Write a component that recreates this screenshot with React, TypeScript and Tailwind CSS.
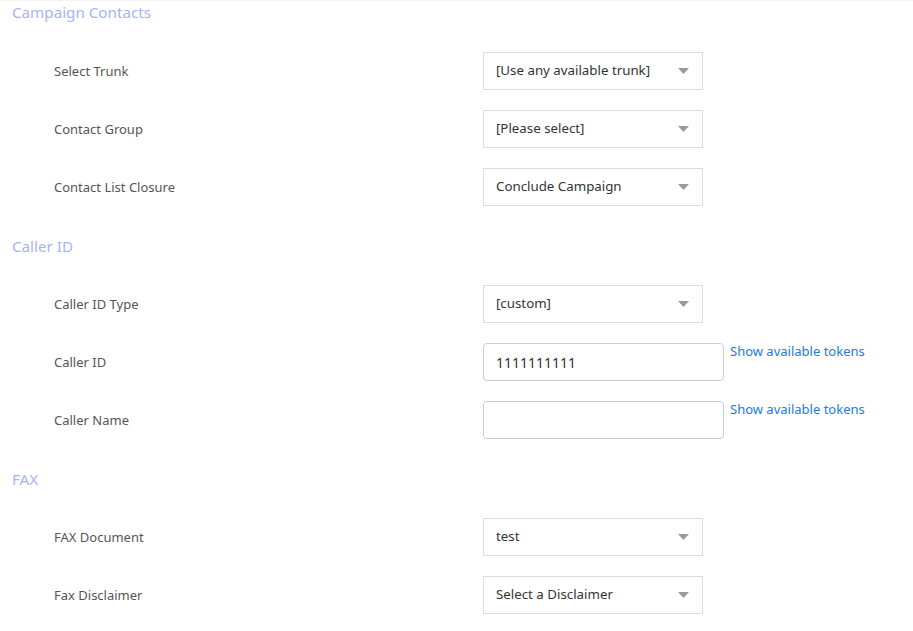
import { ReactNode } from "react";

interface SelectRowProps {
  label: string;
  value: string;
}

interface InputRowProps {
  label: string;
  value?: string;
}

function SectionTitle({ children }: { children: ReactNode }) {
  return <div className="h-[24px] pl-[12px] text-[15.2px] leading-[24px] text-[#a7b3f3]">{children}</div>;
}

function Row({ label, children }: { label: string; children: ReactNode }) {
  return (
    <div className="flex h-[58px] items-center">
      <div className="w-[483px] pl-[54px] pt-[2px] text-[13px] text-[#555]">{label}</div>
      {children}
    </div>
  );
}

function SelectRow({ label, value }: SelectRowProps) {
  return (
    <Row label={label}>
      <div className="flex h-[38px] w-[220px] items-center justify-between border border-[#dcdcdc] bg-white pl-[12px] pr-[12px]">
        <span className="text-[13.3px] text-[#333]">{value}</span>
        <svg width="11" height="6" viewBox="0 0 11 6" className="mr-[1px]">
          <path d="M0 0 L11 0 L5.5 6 Z" fill="#9a9a9a" />
        </svg>
      </div>
    </Row>
  );
}

function InputRow({ label, value }: InputRowProps) {
  return (
    <Row label={label}>
      <div className="flex h-[38px] w-[241px] items-center rounded-[4px] border border-[#ccc] bg-white px-[12px] text-[14px] text-[#333]">
        {value}
      </div>
      <a href="#" className="ml-[6px] self-start pt-[9px] text-[13px] text-[#1a7be6]">
        Show available tokens
      </a>
    </Row>
  );
}

export default function App() {
  return (
    <div
      className="min-h-[631px] w-[913px] border-t border-[#f2f2f2] bg-white"
      style={{ fontFamily: '"Noto Sans", "Open Sans", sans-serif' }}
    >
      <div className="-mt-px">
        <SectionTitle>Campaign Contacts</SectionTitle>
        <div className="mt-[18px]">
          <SelectRow label="Select Trunk" value="[Use any available trunk]" />
          <SelectRow label="Contact Group" value="[Please select]" />
          <SelectRow label="Contact List Closure" value="Conclude Campaign" />
        </div>

        <div className="mt-[18px]">
          <SectionTitle>Caller ID</SectionTitle>
        </div>
        <div className="mt-[17px]">
          <SelectRow label="Caller ID Type" value="[custom]" />
          <InputRow label="Caller ID" value="1111111111" />
          <InputRow label="Caller Name" />
        </div>

        <div className="mt-[18px]">
          <SectionTitle>FAX</SectionTitle>
        </div>
        <div className="mt-[17px]">
          <SelectRow label="FAX Document" value="test" />
          <SelectRow label="Fax Disclaimer" value="Select a Disclaimer" />
        </div>
      </div>
    </div>
  );
}
